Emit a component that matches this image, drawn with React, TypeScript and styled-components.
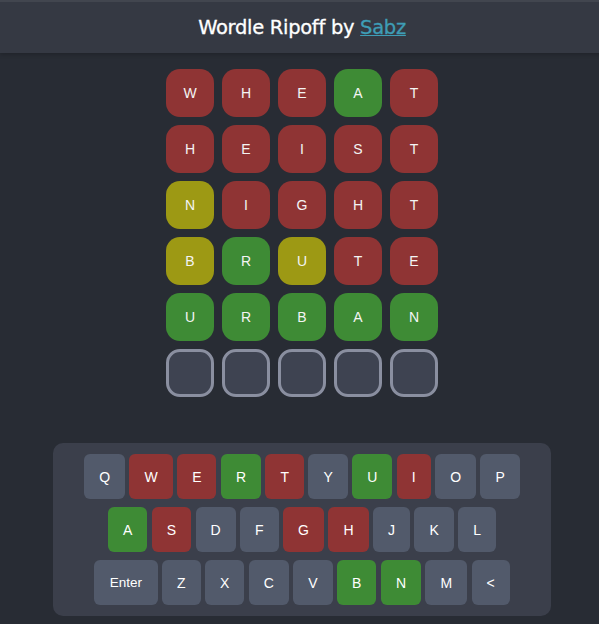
import React from "react";
import styled, { createGlobalStyle } from "styled-components";

type State = "absent" | "present" | "correct" | "none";

const COLORS: Record<State, string> = {
  absent: "#8f3434",
  present: "#9d9914",
  correct: "#3e8b35",
  none: "#525a6b",
};

const GlobalStyle = createGlobalStyle`
  html, body {
    margin: 0;
    padding: 0;
    background: #282c34;
    overflow: hidden;
  }
  body {
    font-family: "Liberation Sans", Arial, sans-serif;
    color: #ffffff;
  }
`;

const Page = styled.div`
  width: 604px;
  min-height: 624px;
  display: flex;
  flex-direction: column;
  align-items: center;
  background: #282c34;
`;

const Header = styled.header`
  align-self: stretch;
  height: 53px;
  background: #353943;
  border-top: 2px solid #42464f;
  box-sizing: border-box;
  box-shadow: 0 2px 4px rgba(0, 0, 0, 0.18);
  display: flex;
  align-items: center;
  justify-content: center;
`;

const Title = styled.h1`
  margin: 0;
  font-family: "DejaVu Sans", sans-serif;
  font-size: 19.5px;
  font-weight: 500;
  letter-spacing: -0.3px;
  color: #ffffff;
  -webkit-text-stroke: 0.3px #ffffff;
`;

const Link = styled.a`
  color: #3e9db6;
  text-decoration: underline;
  -webkit-text-stroke: 0.3px #3e9db6;
`;

const Board = styled.div`
  margin-top: 16px;
  display: grid;
  grid-template-columns: repeat(5, 48px);
  grid-auto-rows: 48px;
  gap: 8px;
`;

const Tile = styled.div<{ $state: State }>`
  box-sizing: border-box;
  width: 48px;
  height: 48px;
  border-radius: 14px;
  display: flex;
  align-items: center;
  justify-content: center;
  font-size: 14px;
  color: #f4f4f4;
  background: ${(p) => (p.$state === "none" ? "#3e4351" : COLORS[p.$state])};
  border: ${(p) => (p.$state === "none" ? "3px solid #8a8fa0" : "none")};
`;

const Keyboard = styled.div`
  margin-top: 46px;
  width: 498px;
  box-sizing: border-box;
  padding: 11px 0;
  background: #3b3f4b;
  border-radius: 10px;
  display: flex;
  flex-direction: column;
  align-items: center;
  gap: 8px;
`;

const KeyRow = styled.div`
  display: flex;
  gap: 4.45px;
  justify-content: center;
`;

const Key = styled.button<{ $state: State; $wide?: boolean }>`
  height: 45px;
  padding: 0 ${(p) => (p.$wide ? "15.5px" : "15px")};
  border: none;
  border-radius: 6px;
  background: ${(p) => COLORS[p.$state]};
  color: #ffffff;
  font-family: "Liberation Sans", Arial, sans-serif;
  font-size: ${(p) => (p.$wide ? "13.5px" : "14px")};
  display: flex;
  align-items: center;
  justify-content: center;
  cursor: pointer;
`;

const guesses: [string, string][] = [
  ["WHEAT", "xxxgx"],
  ["HEIST", "xxxxx"],
  ["NIGHT", "yxxxx"],
  ["BRUTE", "ygyxx"],
  ["URBAN", "ggggg"],
  ["     ", "-----"],
];

const codeToState = (c: string): State =>
  c === "g" ? "correct" : c === "y" ? "present" : c === "x" ? "absent" : "none";

const keyStates: Record<string, State> = {
  W: "absent",
  E: "absent",
  R: "correct",
  T: "absent",
  U: "correct",
  I: "absent",
  A: "correct",
  S: "absent",
  G: "absent",
  H: "absent",
  B: "correct",
  N: "correct",
};

const rows = [
  ["Q", "W", "E", "R", "T", "Y", "U", "I", "O", "P"],
  ["A", "S", "D", "F", "G", "H", "J", "K", "L"],
  ["Enter", "Z", "X", "C", "V", "B", "N", "M", "<"],
];

export default function App() {
  return (
    <>
      <GlobalStyle />
      <Page>
        <Header>
          <Title>
            Wordle Ripoff by <Link href="#">Sabz</Link>
          </Title>
        </Header>
        <Board>
          {guesses.map(([word, code], r) =>
            word.split("").map((ch, i) => (
              <Tile key={`${r}-${i}`} $state={codeToState(code[i])}>
                {ch.trim()}
              </Tile>
            ))
          )}
        </Board>
        <Keyboard>
          {rows.map((row, ri) => (
            <KeyRow key={ri}>
              {row.map((k) => (
                <Key key={k} $state={keyStates[k] ?? "none"} $wide={k === "Enter"}>
                  {k}
                </Key>
              ))}
            </KeyRow>
          ))}
        </Keyboard>
      </Page>
    </>
  );
}
